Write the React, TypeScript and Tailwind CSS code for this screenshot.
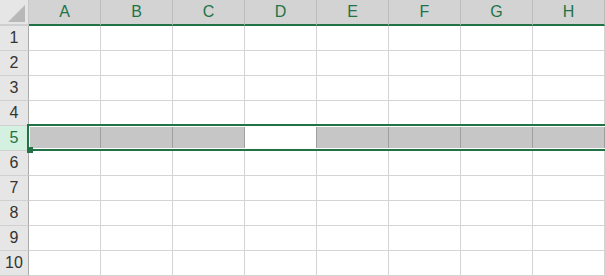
const cols = ["A", "B", "C", "D", "E", "F", "G", "H"];
const rows = [1, 2, 3, 4, 5, 6, 7, 8, 9, 10];
const selectedRow = 5;
const activeCol = "D";

export default function App() {
  return (
    <main
      className="relative h-[276px] w-[605px] overflow-hidden bg-white"
      style={{ fontFamily: '"Liberation Sans", Arial, sans-serif' }}
    >
      <div className="grid grid-cols-[29px_repeat(8,72px)]">
        {/* corner */}
        <div className="relative h-[26px] border-r border-b-2 border-r-[#c8c8c8] border-b-[#cfcfcf] bg-[#e6e6e6]">
          <svg className="absolute left-[7px] top-[5px]" width="19" height="18" viewBox="0 0 19 18">
            <polygon points="18,0 18,17 1,17" fill="#b8b8b8" />
          </svg>
        </div>
        {cols.map((c) => (
          <div
            key={c}
            className="flex h-[26px] items-center justify-center border-r border-b-2 border-r-[#bdbdbd] border-b-[#217346] bg-[#d3d3d3] text-[16px] text-[#217346]"
          >
            {c}
          </div>
        ))}

        {rows.map((r) => {
          const sel = r === selectedRow;
          return (
            <div key={r} className="contents">
              <div
                className={
                  sel
                    ? "flex h-[25px] items-center justify-center border-r border-b border-r-[#ababab] border-b-[#d0d0d0] bg-[#d3f0e0] text-[16px] text-[#217346]"
                    : "flex h-[25px] items-center justify-center border-r border-b border-r-[#ababab] border-b-[#d0d0d0] bg-[#e6e6e6] text-[16px] text-[#333333]"
                }
              >
                {r}
              </div>
              {cols.map((c) => (
                <div
                  key={c}
                  className={
                    sel
                      ? c === activeCol
                        ? "h-[25px] border-r border-b border-[#a0a0a0] bg-white"
                        : "h-[25px] border-r border-b border-[#a0a0a0] bg-[#c6c6c6]"
                      : "h-[25px] border-r border-b border-[#d4d4d4] bg-white"
                  }
                />
              ))}
            </div>
          );
        })}
      </div>

      {/* selection border over row 5 */}
      <div className="absolute left-[27px] top-[124px] h-[27px] w-[600px] border-2 border-[#217346] shadow-[inset_0_0_0_1px_#ffffff]" />
      {/* fill handle */}
      <div className="absolute left-[27px] top-[147px] h-[6px] w-[6px] bg-[#217346]" />
    </main>
  );
}
